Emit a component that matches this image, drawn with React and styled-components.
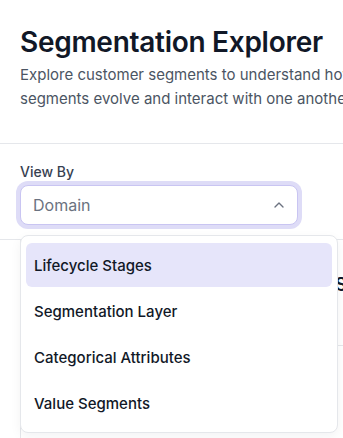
import React from "react";
import styled, { createGlobalStyle } from "styled-components";
import { ChevronUp } from "lucide-react";

const Global = createGlobalStyle`
  html, body { margin: 0; padding: 0; background: #ffffff; overflow: hidden; }
  body { font-family: Inter, "Noto Sans", sans-serif; -webkit-font-smoothing: antialiased; }
  * { box-sizing: border-box; }
`;

const Page = styled.div`
  width: 720px;
  min-height: 438px;
  background: #fff;
`;

const Header = styled.header`
  padding: 24px 20px 24px;
  border-bottom: 1px solid #e5e7eb;
  height: 144px;
`;

const Title = styled.h1`
  margin: 0;
  font-size: 28px;
  line-height: 36px;
  font-weight: 600;
  color: #111827;
  letter-spacing: -0.01em;
`;

const Description = styled.p`
  margin: 3px 0 0;
  width: 360px;
  font-size: 15px;
  line-height: 24px;
  color: #4b5563;
`;

const Toolbar = styled.section`
  padding: 18px 20px 0;
  height: 96px;
  border-bottom: 1px solid #e5e7eb;
`;

const Label = styled.label`
  display: block;
  font-size: 14px;
  line-height: 20px;
  font-weight: 500;
  color: #374151;
  margin-bottom: 3px;
`;

const SelectWrap = styled.div`
  position: relative;
  width: 278px;
`;

const SelectButton = styled.button`
  display: flex;
  align-items: center;
  justify-content: space-between;
  width: 278px;
  height: 40px;
  padding: 0 10px 0 12px;
  background: #fff;
  border: 1px solid #c9c5f2;
  border-radius: 8px;
  box-shadow: 0 0 0 4px #dedcf7;
  font-family: inherit;
  font-size: 16px;
  color: #6b7280;
  cursor: pointer;
  svg { color: #6b7280; }
`;

const Menu = styled.ul`
  position: absolute;
  left: 0;
  top: 50px;
  width: 318px;
  margin: 0;
  padding: 7px 5px;
  list-style: none;
  background: #fff;
  border: 1px solid #e5e7eb;
  border-radius: 8px;
  box-shadow: 0 4px 12px rgba(17, 24, 39, 0.05);
  z-index: 10;
`;

const Item = styled.li`
  display: flex;
  align-items: center;
  height: 44px;
  margin-bottom: 2px;
  padding: 0 8px;
  border-radius: 6px;
  font-size: 15px;
  font-weight: 500;
  color: #111827;
  background: ${(p) => (p.$active ? "#e6e5fa" : "transparent")};
  &:last-child { margin-bottom: 0; }
`;

const Content = styled.section`
  display: flex;
  gap: 5px;
  padding: 0 0 0 20px;
`;

const Card = styled.div`
  width: 310px;
  height: 200px;
  border-left: 1px solid #e5e7eb;
`;

const SideCard = styled.div`
  width: 300px;
  padding-top: 31px;
`;

const SideTitle = styled.h2`
  margin: 0;
  font-size: 18px;
  line-height: 28px;
  font-weight: 600;
  color: #111827;
  padding-bottom: 46px;
  border-bottom: 1px solid #e5e7eb;
`;

const options = [
  "Lifecycle Stages",
  "Segmentation Layer",
  "Categorical Attributes",
  "Value Segments",
];

export default function App() {
  return (
    <Page>
      <Global />
      <Header>
        <Title>Segmentation Explorer</Title>
        <Description>
          Explore customer segments to understand how segments evolve and
          interact with one another
        </Description>
      </Header>
      <Toolbar>
        <Label>View By</Label>
        <SelectWrap>
          <SelectButton type="button">
            <span>Domain</span>
            <ChevronUp size={16} strokeWidth={2} />
          </SelectButton>
          <Menu>
            {options.map((o, i) => (
              <Item key={o} $active={i === 0}>
                {o}
              </Item>
            ))}
          </Menu>
        </SelectWrap>
      </Toolbar>
      <Content>
        <Card />
        <SideCard>
          <SideTitle>Segment Details</SideTitle>
        </SideCard>
      </Content>
    </Page>
  );
}
